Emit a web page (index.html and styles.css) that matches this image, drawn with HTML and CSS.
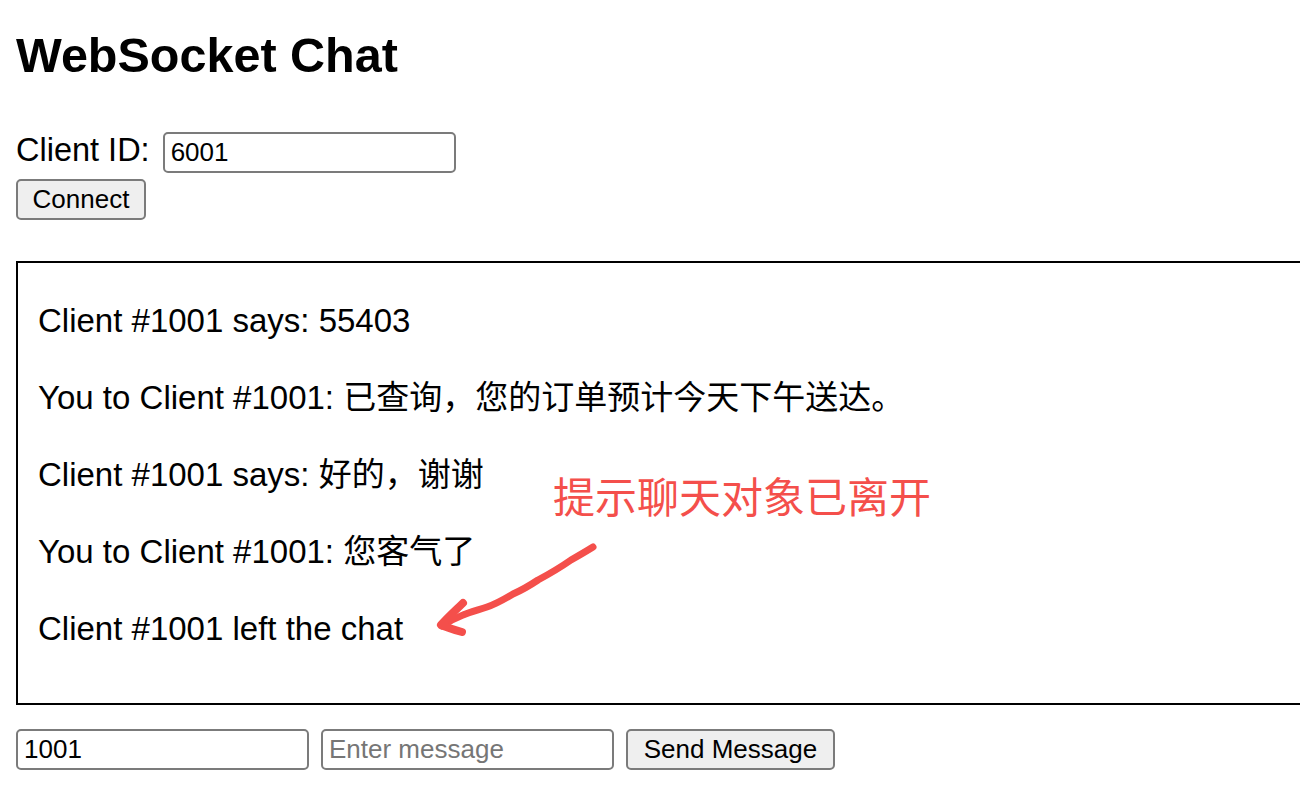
FILE: index.html
```html
<!DOCTYPE html>
<html lang="zh-CN">
<head>
<meta charset="utf-8">
<title>WebSocket Chat</title>
<link rel="stylesheet" href="styles.css">
</head>
<body>
<div class="page">
  <h1 class="title">WebSocket Chat</h1>
  <form class="connect-form" action="#">
    <div class="id-row">
      <label class="id-label" for="clientId">Client ID:</label>
      <input class="field id-field" id="clientId" type="text" value="6001">
    </div>
    <button class="btn connect-btn" type="button">Connect</button>
  </form>
  <div class="chat-box">
    <div class="messages">
      <div class="msg">Client #1001 says: 55403</div>
      <div class="msg">You to Client #1001: 已查询，您的订单预计今天下午送达。</div>
      <div class="msg">Client #1001 says: 好的，谢谢</div>
      <div class="msg">You to Client #1001: 您客气了</div>
      <div class="msg">Client #1001 left the chat</div>
    </div>
    <div class="note">提示聊天对象已离开</div>
    <svg class="arrow" viewBox="420 535 200 110" width="200" height="110" aria-hidden="true">
      <path d="M593 547 C585 552 578 556 571 560 C561 567 551 573 538 580 C529 586 522 590 513 594 C503 600 496 604 487 607 C478 610 470 612 463 615 C455 618 448 622 442 626" fill="none" stroke="#f44f4b" stroke-width="7" stroke-linecap="round" stroke-linejoin="round"/>
      <path d="M463 603 C456 610 448 617 441 625 C448 628 455 630 462 632" fill="none" stroke="#f44f4b" stroke-width="8" stroke-linecap="round" stroke-linejoin="round"/>
    </svg>
  </div>
  <div class="send-row">
    <input class="field" type="text" value="1001">
    <input class="field" type="text" placeholder="Enter message">
    <button class="btn send-btn" type="button">Send Message</button>
  </div>
</div>
</body>
</html>
```
FILE: styles.css
```css
html, body {
  margin: 0;
  padding: 0;
  background: #ffffff;
}

body {
  font-family: "Liberation Sans", Arial, "Noto Sans CJK SC", sans-serif;
  color: #000000;
}

.page {
  padding: 27px 16px 0 16px;
  overflow: hidden;
  height: 806px;
  box-sizing: border-box;
}

.title {
  margin: 0;
  font-size: 48.5px;
  line-height: 56px;
  font-weight: bold;
}

.connect-form {
  margin: 47px 0 0 0;
  display: flex;
  flex-direction: column;
  align-items: flex-start;
  gap: 6px;
}

.id-row {
  display: flex;
  align-items: baseline;
  gap: 13px;
}

.id-label {
  font-size: 32.5px;
  line-height: 41px;
}

.field {
  box-sizing: border-box;
  width: 293px;
  height: 41px;
  margin: 0;
  padding: 0 6px;
  border: 2px solid #7b7b7b;
  border-radius: 5px;
  background: #ffffff;
  font-family: "Liberation Sans", Arial, sans-serif;
  font-size: 26px;
  color: #000000;
  outline: none;
}

.field::placeholder {
  color: #767676;
}

.btn {
  box-sizing: border-box;
  height: 41px;
  margin: 0;
  padding: 0 14px;
  border: 2px solid #7b7b7b;
  border-radius: 5px;
  background: #efefef;
  font-family: "Liberation Sans", Arial, sans-serif;
  font-size: 26px;
  color: #000000;
}

.connect-btn {
  width: 130px;
}

.send-btn {
  width: 209px;
}

.chat-box {
  position: relative;
  margin-top: 41px;
  width: calc(100% + 40px);
  border: 2px solid #000000;
  padding: 39px 20px 55px 20px;
  box-sizing: border-box;
}

.messages {
  display: flex;
  flex-direction: column;
  gap: 39px;
}

.msg {
  font-size: 33px;
  line-height: 38px;
  white-space: nowrap;
}

.note {
  position: absolute;
  left: 535px;
  top: 211px;
  font-family: "Noto Sans CJK SC", "Noto Sans", sans-serif;
  font-size: 42px;
  line-height: 42px;
  color: #f44f4b;
  white-space: nowrap;
}

.arrow {
  position: absolute;
  left: 402px;
  top: 272px;
}

.send-row {
  margin-top: 24px;
  display: flex;
  align-items: center;
  gap: 12px;
}
```
